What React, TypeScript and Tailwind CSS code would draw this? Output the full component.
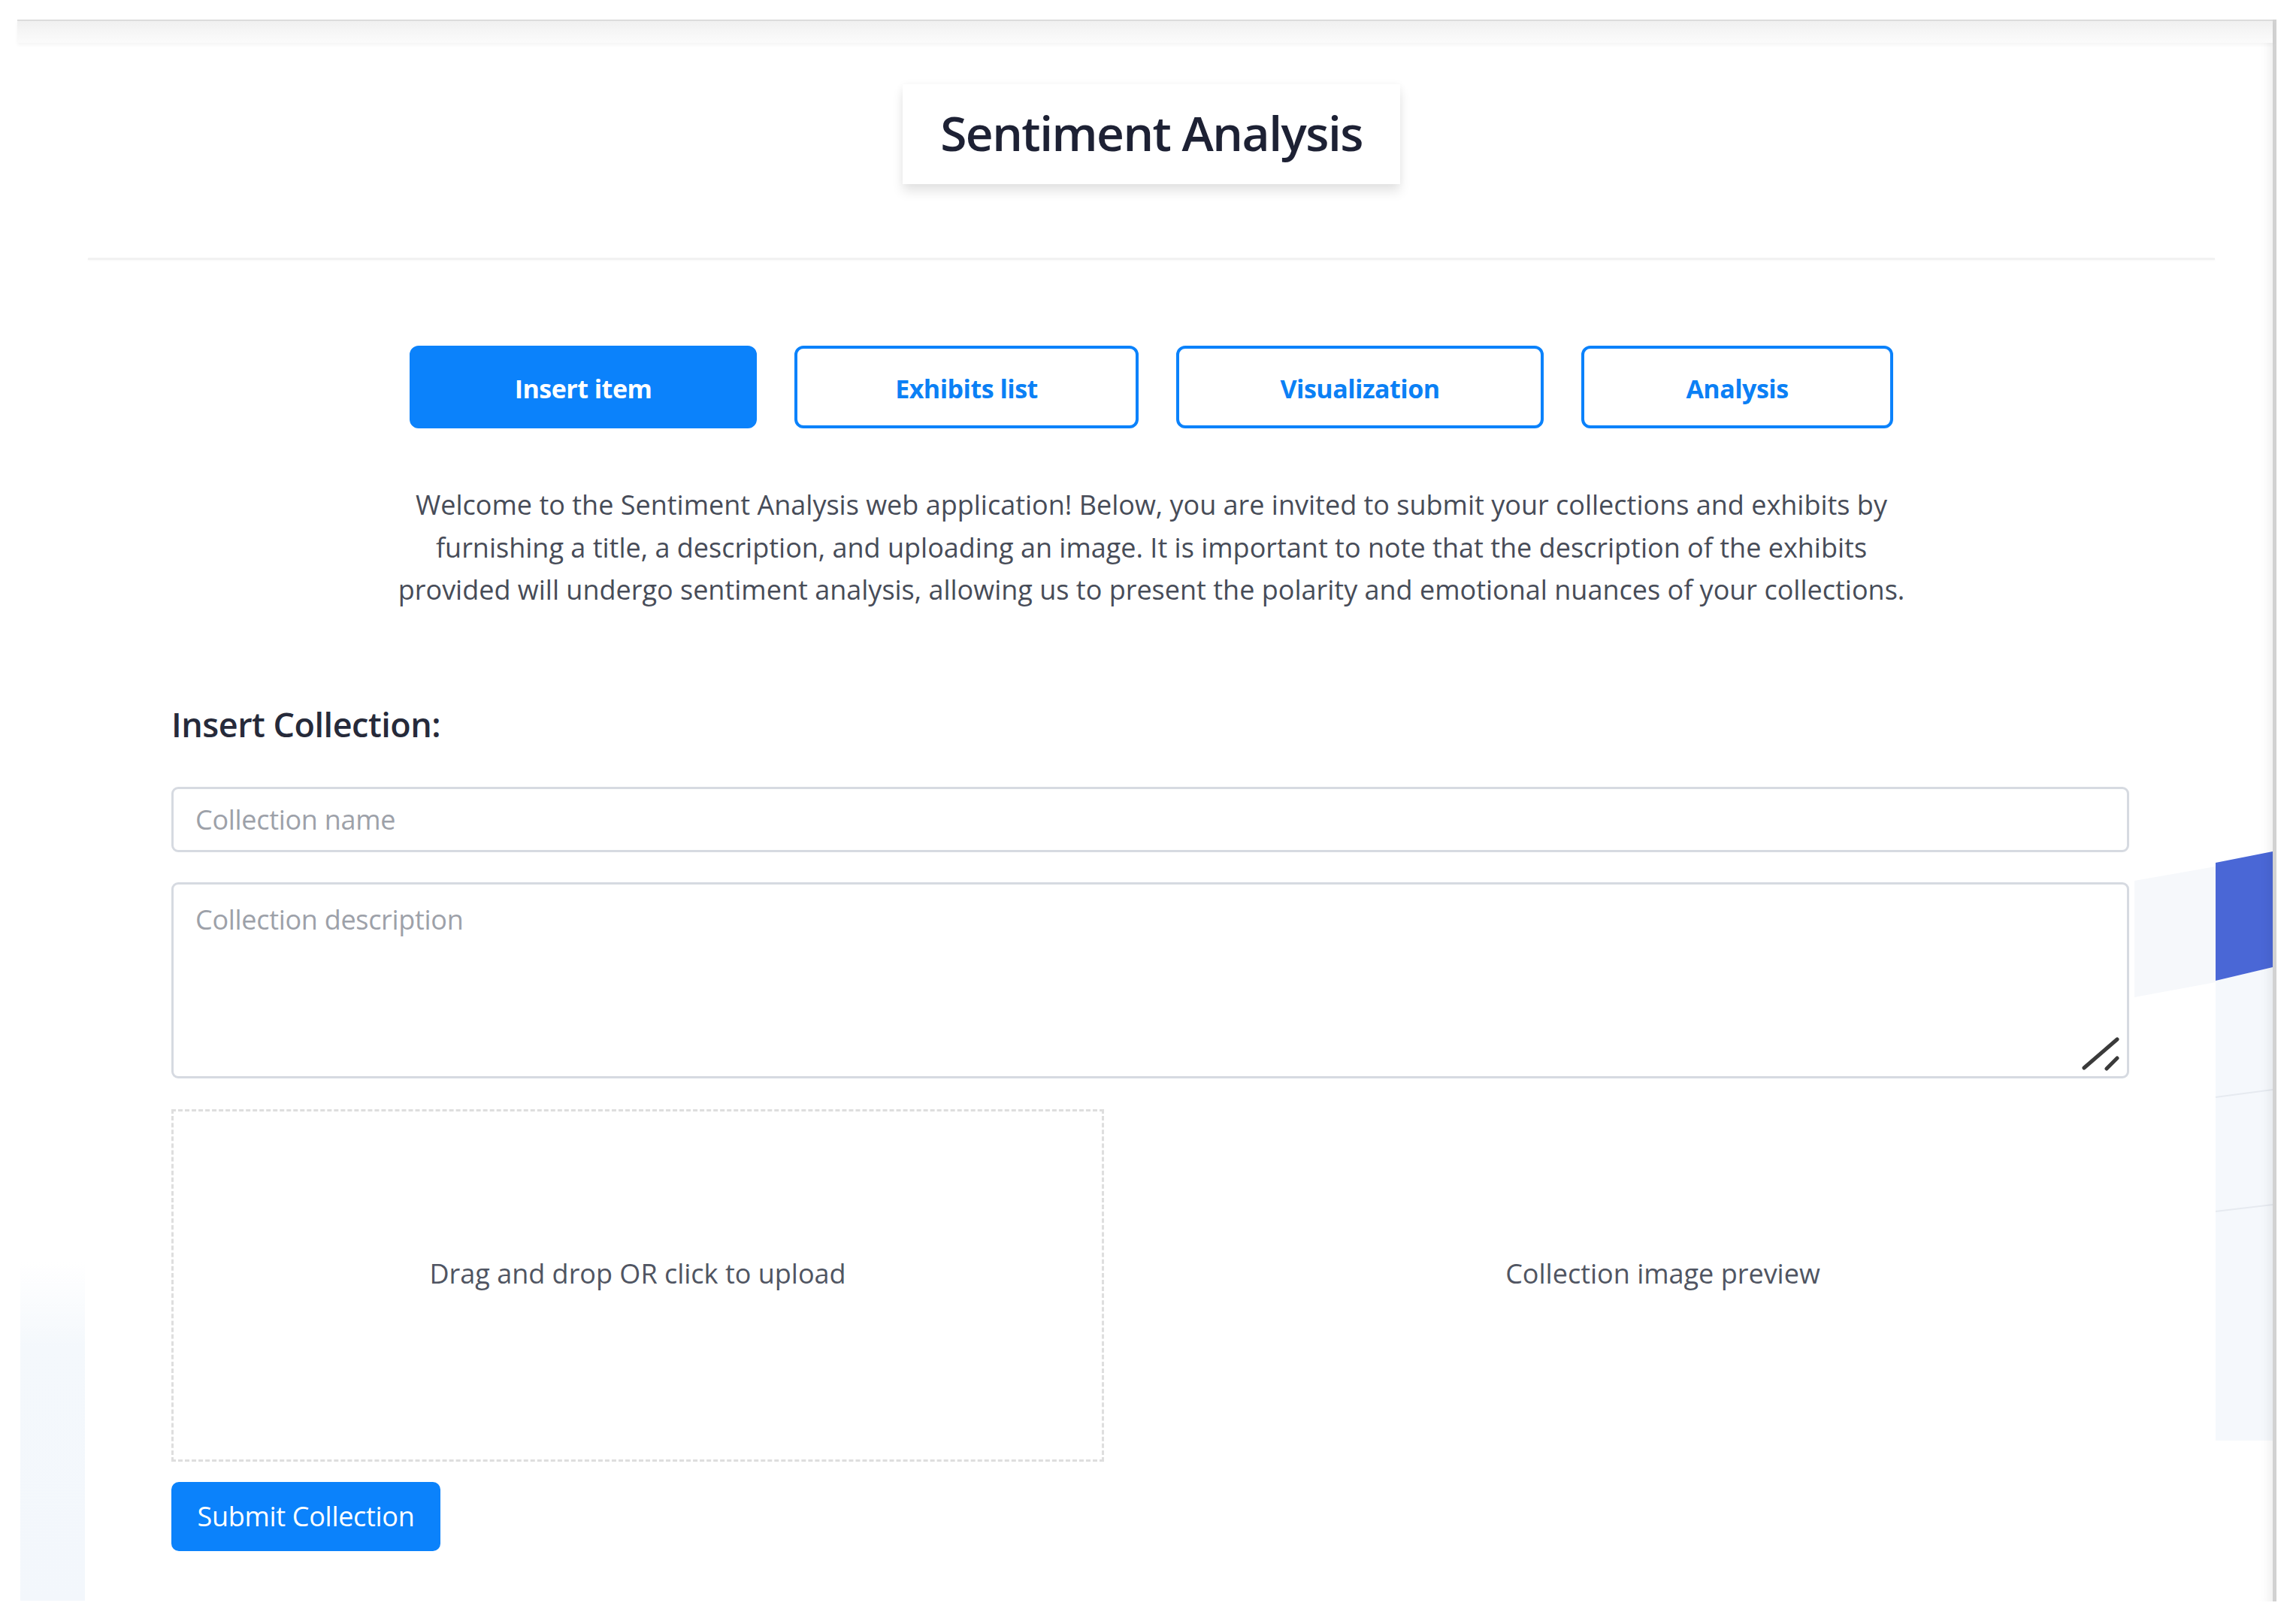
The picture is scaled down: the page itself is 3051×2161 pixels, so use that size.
import React from "react";

function ResizeHandle() {
  return (
    <svg className="absolute right-[12px] bottom-[10px] pointer-events-none" width="52" height="48" viewBox="0 0 52 48">
      <line x1="4" y1="44" x2="48" y2="6" stroke="#3a3a3a" strokeWidth="5" strokeLinecap="round" />
      <line x1="34" y1="45" x2="48" y2="31" stroke="#3a3a3a" strokeWidth="5" strokeLinecap="round" />
    </svg>
  );
}

function Decorations() {
  return (
    <svg className="absolute left-0 top-0 pointer-events-none" width="3051" height="2161" viewBox="0 0 3051 2161">
      <defs>
        <linearGradient id="leftfade" x1="0" y1="0" x2="0" y2="1">
          <stop offset="0" stopColor="#f4f8fc" stopOpacity="0" />
          <stop offset="0.25" stopColor="#f4f8fc" stopOpacity="1" />
          <stop offset="1" stopColor="#f3f7fc" stopOpacity="1" />
        </linearGradient>
      </defs>
      <polygon points="2840,1172 2948,1153 2948,1307 2840,1327" fill="#f6f8fb" />
      <polygon points="2948,1305 3024,1287 3024,1917 2948,1917" fill="#f5f8fc" />
      <line x1="2948" y1="1460" x2="3024" y2="1450" stroke="#e6eaf0" strokeWidth="2" />
      <line x1="2948" y1="1612" x2="3024" y2="1603" stroke="#e6eaf0" strokeWidth="2" />
      <polygon points="2948,1148 3024,1133 3024,1287 2948,1305" fill="#4a67d6" />
      <rect x="27" y="1680" width="86" height="450" fill="url(#leftfade)" />
    </svg>
  );
}

export default function App() {
  const tabs = [
    { label: "Insert item", w: "w-[462px]", active: true },
    { label: "Exhibits list", w: "w-[458px]", active: false },
    { label: "Visualization", w: "w-[489px]", active: false },
    { label: "Analysis", w: "w-[415px]", active: false },
  ];
  return (
    <div className="relative w-[3051px] h-[2161px] bg-white overflow-hidden font-['Open_Sans','Noto_Sans',sans-serif]">
      <Decorations />
      <div className="relative pl-[23px] pt-[26px]">
        <div className="w-[3006px] h-[2105px] border-r-[5px] border-[#d2d2d2] shadow-[inset_-14px_0_14px_-10px_rgba(0,0,0,0.07)] flex flex-col">
          <div className="h-[31px] border-t-[2px] border-[#dcdcdc] bg-gradient-to-b from-[#f0f0f0] via-[#f6f6f6] to-[#fbfbfb] shadow-[0_3px_4px_rgba(0,0,0,0.04)]" />
          <div className="ml-[94px] w-[2830px] flex flex-col">
            <div className="mt-[55px] mx-auto w-[662px] h-[133px] bg-white flex items-center justify-center shadow-[0_10px_14px_rgba(0,0,0,0.10),0_0_10px_rgba(0,0,0,0.04)]">
              <span className="text-[64px] font-semibold text-[#1d2134] tracking-[-1.5px] leading-none pb-[4px]">Sentiment Analysis</span>
            </div>
            <div className="mt-[98px] h-[3px] bg-[#f2f2f2] shadow-[0_1px_3px_rgba(0,0,0,0.03)]" />
            <div className="mt-[114px] flex justify-center gap-[50px]">
              {tabs.map((t) => (
                <button
                  key={t.label}
                  className={
                    t.active
                      ? `${t.w} h-[110px] rounded-[12px] bg-[#0b82fb] border-[4px] border-[#0b82fb] text-white text-[34px] font-bold tracking-[-0.5px] pt-[4px]`
                      : `${t.w} h-[110px] rounded-[12px] bg-white border-[4px] border-[#0b82fb] text-[#0b80f5] text-[34px] font-bold tracking-[-0.5px] pt-[4px]`
                  }
                >
                  {t.label}
                </button>
              ))}
            </div>
            <p className="mt-[74px] text-center text-[36px] leading-[56.5px] text-[#474c58] tracking-[0px]">
              Welcome to the Sentiment Analysis web application! Below, you are invited to submit your collections and exhibits by
              <br />
              furnishing a title, a description, and uploading an image. It is important to note that the description of the exhibits
              <br />
              provided will undergo sentiment analysis, allowing us to present the polarity and emotional nuances of your collections.
            </p>
            <div className="ml-[111px] w-[2605px] flex flex-col">
              <h2 className="mt-[122px] text-[45px] font-semibold text-[#262a3a] leading-[56px] tracking-[-0.5px]">Insert Collection:</h2>
              <input
                className="mt-[55px] h-[87px] w-full rounded-[9px] border-[3px] border-[#d6dae1] px-[29px] text-[36px] text-[#333] placeholder:text-[#9da1a9] outline-none tracking-[-0.3px]"
                placeholder="Collection name"
              />
              <div className="relative mt-[40px]">
                <textarea
                  className="block h-[261px] w-full resize-none rounded-[9px] border-[3px] border-[#d6dae1] px-[29px] py-[20px] text-[36px] text-[#333] placeholder:text-[#9da1a9] outline-none tracking-[-0.3px]"
                  placeholder="Collection description"
                />
                <ResizeHandle />
              </div>
              <div className="mt-[41px] h-[469px] grid grid-cols-2 gap-[123px]">
                <div className="border-[3px] border-dashed border-[#dedede] flex items-center justify-center pb-[30px]">
                  <span className="text-[36px] text-[#505562] tracking-[0px]">Drag and drop OR click to upload</span>
                </div>
                <div className="flex items-center justify-center pb-[30px]">
                  <span className="text-[36px] text-[#505562] tracking-[0px]">Collection image preview</span>
                </div>
              </div>
              <div className="mt-[27px]">
                <button className="w-[358px] h-[92px] rounded-[10px] bg-[#0b82fb] text-white text-[36px] font-medium tracking-[-0.3px]">
                  Submit Collection
                </button>
              </div>
            </div>
          </div>
        </div>
      </div>
    </div>
  );
}
